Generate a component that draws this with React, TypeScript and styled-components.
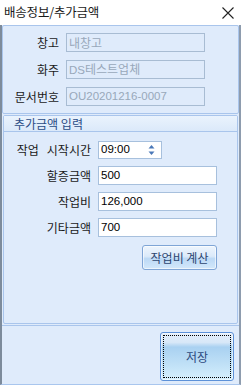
import React from "react";
import styled, { createGlobalStyle } from "styled-components";

const Global = createGlobalStyle`
  html, body { margin: 0; padding: 0; background: #ffffff; }
  body { font-family: "Noto Sans CJK KR", "Liberation Sans", sans-serif; }
  * { box-sizing: border-box; }
`;

const Window = styled.div`
  width: 241px;
  height: 385px;
  display: flex;
  flex-direction: column;
  background: #ffffff;
  overflow: hidden;
`;

const TitleBar = styled.div`
  height: 25px;
  flex: none;
  display: flex;
  align-items: center;
  justify-content: space-between;
  padding: 0 7px 0 4px;
  background: #ffffff;
`;

const Title = styled.span`
  font-size: 12.5px;
  color: #1a1a1a;
  line-height: 1;
  letter-spacing: -0.2px;
`;

const Body = styled.div`
  flex: 1;
  display: flex;
  flex-direction: column;
  background: #dfebfb;
  border-left: 2px solid #7d8b9b;
  border-right: 2px solid #8e9cae;
  border-bottom: 1px solid #a9c6ee;
`;

const InfoPanel = styled.div`
  height: 89px;
  flex: none;
  border: 1px solid #a9c5ec;
  border-radius: 2px;
  display: flex;
  flex-direction: column;
  gap: 8px;
  padding: 7px 0 0 0;
`;

const Row = styled.div<{ $labelW: number }>`
  display: grid;
  grid-template-columns: ${(p) => p.$labelW}px auto;
  column-gap: 7px;
  align-items: center;
`;

const Label = styled.span`
  font-size: 12px;
  color: #1a1a1a;
  text-align: right;
  white-space: pre;
  line-height: 1;
`;

const WordGap = styled.span`
  display: inline-block;
  width: 8px;
`;

const Field = styled.div<{ $w: number; $h?: number; $disabled?: boolean }>`
  width: ${(p) => p.$w}px;
  height: ${(p) => p.$h ?? 19}px;
  border: 1px solid ${(p) => (p.$disabled ? "#a8bcd3" : "#a7c0dd")};
  background: ${(p) => (p.$disabled ? "transparent" : "#ffffff")};
  color: ${(p) => (p.$disabled ? "#98a8ba" : "#000000")};
  font-family: ${(p) => (p.$disabled ? '"Noto Sans CJK KR", "Liberation Sans", sans-serif' : '"Liberation Sans", "Noto Sans CJK KR", sans-serif')};
  font-size: ${(p) => (p.$disabled ? "12px" : "11.5px")};
  display: flex;
  align-items: center;
  justify-content: space-between;
  padding: 0 2px;
  line-height: 1;
`;

const LatinText = styled.span`
  font-family: "Liberation Sans", sans-serif;
  font-size: 11.5px;
`;

const Group = styled.div`
  height: 209px;
  flex: none;
  margin: 1px 1px 0 1px;
  border: 1px solid #a9c5ec;
  border-radius: 2px;
  display: flex;
  flex-direction: column;
`;

const GroupHeader = styled.div`
  height: 16px;
  flex: none;
  background: linear-gradient(#eaf3fd, #dbe9fa);
  border-bottom: 1px solid #a9c5ec;
  padding-left: 10px;
  display: flex;
  align-items: center;
  font-size: 12px;
  color: #2a4c86;
  line-height: 1;
`;

const GroupContent = styled.div`
  display: flex;
  flex-direction: column;
  gap: 7px;
  padding: 9px 0 0 0;
`;

const ButtonRow = styled.div`
  display: flex;
  justify-content: flex-end;
  padding-right: 20px;
  margin-top: 1px;
`;

const CalcButton = styled.button`
  width: 75px;
  height: 25px;
  border: 1px solid #7fa5d6;
  border-radius: 3px;
  background: linear-gradient(#eef5fd 0%, #dbeafa 45%, #bcd9f5 55%, #d3e8fb 100%);
  font-family: "Noto Sans CJK KR", sans-serif;
  font-size: 12px;
  color: #2d4670;
  padding: 0;
  line-height: 1;
  box-shadow: inset 0 0 0 1px rgba(255, 255, 255, 0.6);
`;

const Footer = styled.div`
  flex: 1;
  margin-top: 1px;
  border-top: 1px solid #a9c5ec;
  display: flex;
  justify-content: flex-end;
  padding: 6px 5px 0 0;
`;

const SaveButton = styled.button`
  position: relative;
  width: 74px;
  height: 49px;
  border: 1px solid #5d91d8;
  border-radius: 3px;
  background: linear-gradient(#e4eefa 0%, #d8e8f8 20%, #a9d1f1 30%, #c2e2f7 70%, #d6f0fd 100%);
  font-family: "Noto Sans CJK KR", sans-serif;
  font-size: 12px;
  color: #2d4a7e;
  padding: 0;
  line-height: 1;
  box-shadow: inset 0 0 0 1px rgba(255, 255, 255, 0.5);
`;

const FocusRing = styled.span`
  position: absolute;
  inset: 2px;
  border: 1px dotted #000000;
`;

const Spinner = styled.svg`
  flex: none;
  margin-right: 4px;
`;

function CloseIcon() {
  return (
    <svg width="12" height="12" viewBox="0 0 12 12">
      <path d="M0.5 0.5 L11.5 11.5 M11.5 0.5 L0.5 11.5" stroke="#222" strokeWidth="1.1" fill="none" />
    </svg>
  );
}

export default function App() {
  return (
    <Window>
      <Global />
      <TitleBar>
        <Title>배송정보/추가금액</Title>
        <CloseIcon />
      </TitleBar>
      <Body>
        <InfoPanel>
          <Row $labelW={56}>
            <Label>창고</Label>
            <Field $w={139} $disabled>
              내창고
            </Field>
          </Row>
          <Row $labelW={56}>
            <Label>화주</Label>
            <Field $w={139} $disabled>
              <span>
                <LatinText>DS</LatinText>테스트업체
              </span>
            </Field>
          </Row>
          <Row $labelW={56}>
            <Label>문서번호</Label>
            <Field $w={139} $disabled>
              <LatinText>OU20201216-0007</LatinText>
            </Field>
          </Row>
        </InfoPanel>
        <Group>
          <GroupHeader>추가금액 입력</GroupHeader>
          <GroupContent>
            <Row $labelW={87}>
              <Label>
                작업<WordGap />시작시간
              </Label>
              <Field $w={64} $h={18}>
                <span>09:00</span>
                <Spinner width="7" height="12" viewBox="0 0 7 12">
                  <path d="M3.5 1 L6.5 4.5 L0.5 4.5 Z" fill="#4a78b8" />
                  <path d="M0.5 7.5 L6.5 7.5 L3.5 11 Z" fill="#4a78b8" />
                </Spinner>
              </Field>
            </Row>
            <Row $labelW={87}>
              <Label>할증금액</Label>
              <Field $w={119}>500</Field>
            </Row>
            <Row $labelW={87}>
              <Label>작업비</Label>
              <Field $w={119}>126,000</Field>
            </Row>
            <Row $labelW={87}>
              <Label>기타금액</Label>
              <Field $w={119}>700</Field>
            </Row>
            <ButtonRow>
              <CalcButton>작업비 계산</CalcButton>
            </ButtonRow>
          </GroupContent>
        </Group>
        <Footer>
          <SaveButton>
            <FocusRing />
            저장
          </SaveButton>
        </Footer>
      </Body>
    </Window>
  );
}
